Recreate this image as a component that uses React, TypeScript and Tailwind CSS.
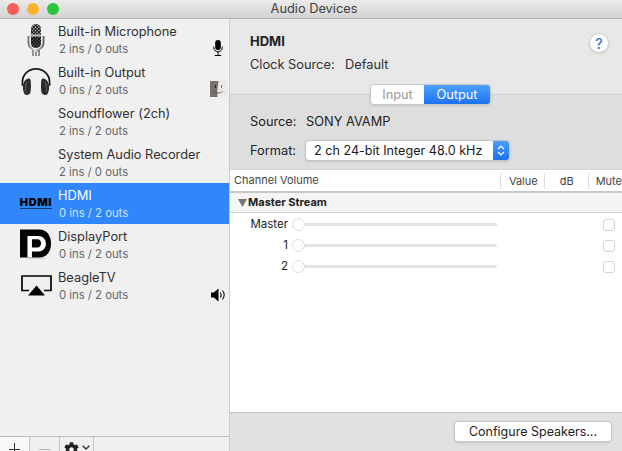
import { ReactNode } from 'react'
import { FaCog } from 'react-icons/fa'

function MicIcon() {
    return (
        <svg width="18" height="34" viewBox="0 0 18 34">
            <defs>
                <pattern id="mesh" width="2.4" height="2.4" patternUnits="userSpaceOnUse" patternTransform="rotate(45)">
                    <rect width="2.4" height="2.4" fill="#e2e2e2" />
                    <rect width="1.3" height="2.4" fill="#222" />
                    <rect width="2.4" height="1" fill="#111" />
                </pattern>
                <linearGradient id="chrome" x1="0" x2="1" y1="0" y2="0">
                    <stop offset="0" stopColor="#777" />
                    <stop offset="0.4" stopColor="#e8e8e8" />
                    <stop offset="1" stopColor="#666" />
                </linearGradient>
            </defs>
            <rect x="4" y="1" width="10" height="24" rx="5" fill="url(#mesh)" />
            <rect x="3.5" y="11.5" width="11" height="2" fill="#bbb" />
            <path d="M4 14h10v6a5 5 0 0 1-10 0z" fill="#111" opacity="0.55" />
            <path d="M1.5 13v6.5a7.5 7.5 0 0 0 15 0V13" fill="none" stroke="url(#chrome)" strokeWidth="2" />
            <rect x="5" y="27" width="8" height="2" fill="url(#chrome)" />
            <path d="M6 29v4M9 29v4M12 29v4" stroke="#555" strokeWidth="1.2" />
        </svg>
    )
}

function HeadphonesIcon() {
    return (
        <svg width="33" height="30" viewBox="0 0 33 30">
            <path d="M2.5 20V16a14 13.5 0 0 1 28 0v4" fill="none" stroke="#1c1c1c" strokeWidth="1.8" />
            <path d="M9 12.5c-3 .3-5.5 3-6 8-.3 3.5.8 7 2 8.5 2.5 1 5 0 5.5-1.5 1-3 1-9.5.5-13-.4-1.6-1-2.1-2-2z" fill="#2a2a2a" />
            <path d="M24 12.5c3 .3 5.5 3 6 8 .3 3.5-.8 7-2 8.500-2.500 1-5 0-5.500-1.500-1-3-1-9.500-.5-13 .4-1.600 1-2.100 2-2z" fill="#2a2a2a" />
            <path d="M7 16c-1 2-1.500 6-1 10M26 16c1 2 1.500 6 1 10" stroke="#6a6a6a" strokeWidth="1" fill="none" />
        </svg>
    )
}

function HdmiLogo() {
    return (
        <div className="flex flex-col items-center leading-none">
            <span className="text-[11px] leading-[9px] font-black tracking-[0.6px] text-black">HDMI</span>
            <div className="mt-[1px] h-[1px] w-[32px] bg-[#143a78]" />
        </div>
    )
}

function DisplayPortIcon() {
    return (
        <svg width="33" height="31" viewBox="0 0 33 31">
            <path d="M0 0h20C28 0 32 7 32 14.500S28 29 20 29H0z" fill="#050505" />
            <path d="M7.700 6.700H19c4.500 0 7.700 3.300 7.700 8s-3.200 8-7.700 8h-6.700V29H7.700z" fill="#fff" />
            <path d="M12.300 10H18c2.300 0 3.700 1.800 3.700 4.300S20.300 18.700 18 18.700h-5.700z" fill="#050505" />
            <ellipse cx="17" cy="29.800" rx="11" ry="1" fill="#000" opacity="0.1" />
        </svg>
    )
}

function AirPlayIcon() {
    return (
        <svg width="31" height="21" viewBox="0 0 31 21">
            <path d="M8 15.500H1V1h29v14.500h-7" fill="none" stroke="#000" strokeWidth="1.700" />
            <path d="M15.500 10.500L24 20.500H7z" fill="#000" />
        </svg>
    )
}

function SmallMic() {
    return (
        <svg width="10" height="16" viewBox="0 0 10 16">
            <rect x="2.200" y="0" width="5.600" height="10" rx="2.800" fill="#000" />
            <path d="M.7 6.500V7.500a4.300 4.300 0 0 0 8.600 0V6.500" fill="none" stroke="#000" strokeWidth="1" />
            <path d="M5 12v3M1.800 15.500h6.400" stroke="#000" strokeWidth="1" />
        </svg>
    )
}

function FinderIcon() {
    return (
        <svg width="16" height="16" viewBox="0 0 16 16">
            <rect width="16" height="16" fill="#e9e9e9" />
            <path d="M0 0h8.500C8 5 7 9 7.500 16H0z" fill="#77716b" />
            <rect x="5" y="4" width="1" height="3" fill="#222" />
            <rect x="11" y="4" width="1" height="3" fill="#777" />
            <path d="M3.500 10.500c2.500 2 6.500 2 9 0" fill="none" stroke="#444" strokeWidth="0.800" />
        </svg>
    )
}

function SpeakerIcon() {
    return (
        <svg width="15" height="14" viewBox="0 0 15 14">
            <path d="M0 4.500h2.800L7.500 .5v13L2.800 9.500H0z" fill="#000" />
            <path d="M9.300 4.500c1 1.500 1 3.500 0 5M11.500 2.500c2 2.700 2 6.300 0 9" fill="none" stroke="#111" strokeWidth="1.100" />
        </svg>
    )
}

type Device = { name: string; info: string; icon?: ReactNode; side?: ReactNode; selected?: boolean }

const devices: Device[] = [
    { name: 'Built-in Microphone', info: '2 ins / 0 outs', icon: <MicIcon />, side: <SmallMic /> },
    { name: 'Built-in Output', info: '0 ins / 2 outs', icon: <HeadphonesIcon />, side: <FinderIcon /> },
    { name: 'Soundflower (2ch)', info: '2 ins / 2 outs' },
    { name: 'System Audio Recorder', info: '2 ins / 0 outs' },
    { name: 'HDMI', info: '0 ins / 2 outs', icon: <HdmiLogo />, selected: true },
    { name: 'DisplayPort', info: '0 ins / 2 outs', icon: <DisplayPortIcon /> },
    { name: 'BeagleTV', info: '0 ins / 2 outs', icon: <AirPlayIcon />, side: <SpeakerIcon /> },
]

function DeviceRow({ device }: { device: Device }) {
    return (
        <div className={`flex h-[41px] items-stretch ${device.selected ? 'bg-[#2f87fb]' : ''}`}>
            <div className="ml-[20px] mr-[6px] flex w-[32px] items-center justify-center">{device.icon}</div>
            <div className="flex-1 pt-[4px]">
                <div className={`text-[12.8px] leading-[17px] ${device.selected ? 'text-white' : 'text-[#303030]'}`}>{device.name}</div>
                <div className={`mt-[1px] pl-[1px] text-[11.3px] leading-[17px] ${device.selected ? 'text-[#d0e3fd]' : 'text-[#666]'}`}>{device.info}</div>
            </div>
            <div className="mr-[3px] flex w-[16px] items-end justify-center pb-[4px]">{device.side}</div>
        </div>
    )
}

function Sidebar() {
    return (
        <div className="flex w-[230px] flex-col border-r border-[#cdcdcd] bg-[#f0f0f0]">
            <div className="flex-1">
                {devices.map(d => <DeviceRow key={d.name} device={d} />)}
            </div>
            <div className="flex h-[15px] border-t border-[#bdbdbd] text-[#333]">
                <div className="flex w-[30px] justify-center border-r border-[#c6c6c6] bg-[#f8f8f8]">
                    <svg width="12" height="14" viewBox="0 0 12 14">
                        <path d="M0 12.500h11M5.500 6v8" stroke="#333" strokeWidth="1" />
                    </svg>
                </div>
                <div className="flex w-[30px] justify-center border-r border-[#c6c6c6]">
                    <span className="mt-[12px] h-[1px] w-[11px] bg-[#b5b5b5]" />
                </div>
                <div className="flex w-[34px] justify-center gap-[3px] border-r border-[#c6c6c6] pt-[5px]">
                    <FaCog className="h-[15px] w-[15px] text-[#222]" />
                    <svg width="8" height="5" viewBox="0 0 8 5" className="mt-[3px]">
                        <path d="M.7.7L4 4l3.300-3.300" fill="none" stroke="#333" strokeWidth="1.300" />
                    </svg>
                </div>
            </div>
        </div>
    )
}

function ChannelRow({ label }: { label: string }) {
    return (
        <div className="flex h-[21px] items-center">
            <div className="w-[58px] text-right text-[11.5px] text-[#222]">{label}</div>
            <div className="ml-[4px] flex w-[205px] items-center">
                <div className="z-10 h-[13px] w-[13px] shrink-0 rounded-full border border-[#dcdcdc] bg-white" />
                <div className="h-[3px] flex-1 rounded-r-sm bg-[#e4e4e4]" />
            </div>
            <div className="ml-[106px] h-[12px] w-[12px] rounded-[3px] border border-[#d4d4d4] bg-white" />
        </div>
    )
}

function Detail() {
    return (
        <div className="flex min-w-0 flex-1 flex-col">
            <div className="relative h-[76px] shrink-0 border-b border-[#d2d2d2] bg-[#e8e8e8] px-[20px] pt-[14px]">
                <div className="flex h-[20px] justify-between">
                    <div className="text-[13px] leading-[17px] font-bold text-[#222]">HDMI</div>
                    <div className="mr-[-7px] flex h-[20px] w-[20px] items-center justify-center rounded-full border border-[#cfcfcf] bg-white text-[14px] font-medium text-[#2a74d8] shadow-sm">?</div>
                </div>
                <div className="mt-[3px] flex text-[12.8px] leading-[17px] text-[#303030]">
                    <span className="w-[95px]">Clock Source:</span>
                    <span>Default</span>
                </div>
                <div className="absolute left-[140px] top-[65px] flex h-[21px] w-[121px] overflow-hidden rounded-[4px] border border-[#c8c8c8] text-[12.8px] leading-[19px] shadow-sm">
                    <div className="w-[53px] bg-white text-center text-[#9a9a9a]">Input</div>
                    <div className="flex-1 bg-gradient-to-b from-[#4da0fc] to-[#1a73f0] text-center text-white">Output</div>
                </div>
            </div>
            <div className="h-[74px] shrink-0 bg-[#dedede] px-[20px] pt-[18px] text-[12.8px] text-[#222]">
                <div className="flex leading-[17px]">
                    <span className="w-[56px]">Source:</span>
                    <span>SONY AVAMP</span>
                </div>
                <div className="mt-[10px] flex items-center">
                    <span className="w-[55px]">Format:</span>
                    <div className="flex h-[21px] w-[205px] overflow-hidden rounded-[4px] border border-[#c4c4c4] bg-white leading-[19px] shadow-sm">
                        <span className="flex-1 pl-[8px] text-[12.6px] whitespace-nowrap text-[#1a1a1a]">2 ch 24-bit Integer 48.0 kHz</span>
                        <div className="flex w-[16px] shrink-0 items-center justify-center bg-gradient-to-b from-[#4da0fc] to-[#1a6fe8]">
                            <svg width="8" height="13" viewBox="0 0 8 13">
                                <path d="M1 5l3-3 3 3M1 8l3 3 3-3" fill="none" stroke="#fff" strokeWidth="1.200" />
                            </svg>
                        </div>
                    </div>
                </div>
            </div>
            <div className="flex h-[24px] shrink-0 items-center overflow-hidden border-t border-b-2 border-t-[#d8d8d8] border-b-[#c8c8c8] bg-white text-[11px] text-[#444]">
                <div className="w-[271px] pl-[4px]">Channel Volume</div>
                <div className="h-[16px] w-[44px] border-l border-[#dcdcdc] pl-[8px] leading-[16px]">Value</div>
                <div className="h-[16px] w-[44px] border-l border-[#dcdcdc] pl-[15px] leading-[16px]">dB</div>
                <div className="h-[16px] flex-1 border-l border-[#dcdcdc] pl-[7px] leading-[16px] whitespace-nowrap">Mute</div>
            </div>
            <div className="flex h-[20px] shrink-0 items-center border-b border-[#cfcfcf] bg-[#f5f5f5] pl-[8px] text-[11px] font-bold text-[#222]">
                <svg width="10" height="8" viewBox="0 0 10 8">
                    <path d="M0 0h9L4.500 8z" fill="#777" />
                </svg>
                Master Stream
            </div>
            <div className="flex-1 bg-white pt-[1px]">
                <ChannelRow label="Master" />
                <ChannelRow label="1" />
                <ChannelRow label="2" />
            </div>
            <div className="flex h-[39px] shrink-0 justify-end border-t border-[#c4c4c4] bg-[#e1e1e1] pr-[10px] pt-[8px]">
                <div className="h-[21px] w-[158px] rounded-[4px] border border-[#c8c8c8] bg-white text-center text-[12.5px] leading-[19px] text-[#222] shadow-sm">Configure Speakers...</div>
            </div>
        </div>
    )
}

export default function App() {
    return (
        <div className="flex h-[451px] w-[622px] flex-col overflow-hidden bg-white font-['Inter','Liberation_Sans',sans-serif]">
            <div className="relative flex h-[19px] shrink-0 items-center justify-center border-b border-[#b4b4b4] bg-gradient-to-b from-[#ebebeb] to-[#d3d3d3] pl-[6px] text-[12.8px] text-[#404040]">
                <div className="absolute left-[7px] top-[3px] flex gap-[8px]">
                    <div className="h-[12px] w-[12px] rounded-full bg-[#fb5c55]" />
                    <div className="h-[12px] w-[12px] rounded-full bg-[#fdb32c]" />
                    <div className="h-[12px] w-[12px] rounded-full bg-[#2bc53e]" />
                </div>
                Audio Devices
            </div>
            <div className="flex min-h-0 flex-1">
                <Sidebar />
                <Detail />
            </div>
        </div>
    )
}
